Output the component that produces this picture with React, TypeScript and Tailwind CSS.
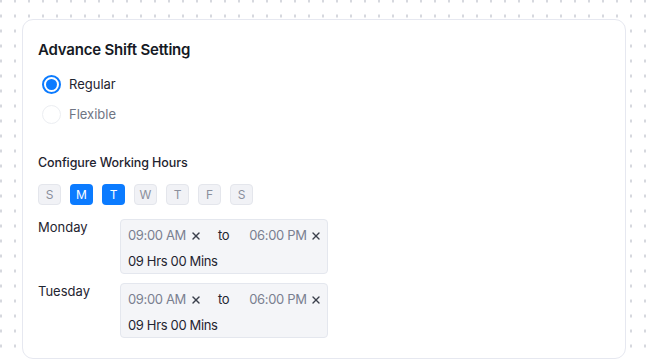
import { X } from 'lucide-react';

const days = [
  { d: 'S', on: false },
  { d: 'M', on: true },
  { d: 'T', on: true },
  { d: 'W', on: false },
  { d: 'T', on: false },
  { d: 'F', on: false },
  { d: 'S', on: false },
];

function TimeRow({ day }: { day: string }) {
  return (
    <div className="flex items-start">
      <div className="w-[82px] text-[13px] leading-[16px] text-[#1f2430]">{day}</div>
      <div className="w-[208px] h-[55px] rounded-[4px] border border-[#e4e7ee] bg-[#f4f5f8] pl-[7px] pt-[7px] whitespace-nowrap tracking-[-0.35px]">
        <div className="flex items-center h-[17px] text-[13px]">
          <span className="text-[#7a8090] shrink-0">09:00 AM</span>
          <X className="ml-[4px] w-[12px] h-[12px] text-[#3b404c] shrink-0" strokeWidth={2.8} />
          <span className="ml-[16px] text-[#1f2430] shrink-0">to</span>
          <span className="ml-[20px] text-[#7a8090] shrink-0">06:00 PM</span>
          <X className="ml-[3px] w-[12px] h-[12px] text-[#3b404c] shrink-0" strokeWidth={2.8} />
        </div>
        <div className="mt-[8px] text-[13px] text-[#1f2430]">09 Hrs 00 Mins</div>
      </div>
    </div>
  );
}

export default function App() {
  return (
    <div
      className="w-[647px] h-[359px] overflow-hidden bg-white bg-[radial-gradient(circle,#d6d8de_1.2px,transparent_1.4px)] bg-[size:14px_15px] bg-[position:-6px_-6.5px] pl-[22px] pt-[19px]"
      style={{ fontFamily: 'Inter, "Noto Sans", sans-serif' }}
    >
      <div className="w-[604px] h-[340px] rounded-[11px] border border-[#e6e8f0] bg-white px-[15px] pt-[20px]">
        <h1 className="text-[15px] font-semibold text-[#161a24] tracking-[-0.2px] leading-[20px]">Advance Shift Setting</h1>

        <div className="mt-[15px] flex flex-col gap-[10px]">
          <label className="flex items-center gap-[8px]">
            <span className="w-[19px] h-[19px] ml-[4px] rounded-full border-[2px] border-[#0b7bff] flex items-center justify-center">
              <span className="w-[11px] h-[11px] rounded-full bg-[#0b7bff]" />
            </span>
            <span className="text-[13px] text-[#1f2430]">Regular</span>
          </label>
          <label className="flex items-center gap-[8px]">
            <span className="w-[19px] h-[19px] ml-[4px] rounded-full border border-[#eceef2]" />
            <span className="text-[13px] text-[#6f7584]">Flexible</span>
          </label>
        </div>

        <h2 className="mt-[30px] text-[12.5px] font-medium text-[#1f2430] leading-[17px] tracking-[-0.1px]">Configure Working Hours</h2>

        <div className="mt-[13px] flex gap-[9px]">
          {days.map((x, i) => (
            <div
              key={i}
              className={
                x.on
                  ? 'w-[23px] h-[21px] rounded-[4px] bg-[#0b7bff] text-white text-[12px] flex items-center justify-center'
                  : 'w-[23px] h-[21px] rounded-[4px] bg-[#f1f2f6] border border-[#e4e6ec] text-[#8a8f9c] text-[12px] flex items-center justify-center'
              }
            >
              {x.d}
            </div>
          ))}
        </div>

        <div className="mt-[14px] flex flex-col gap-[9px]">
          <TimeRow day="Monday" />
          <TimeRow day="Tuesday" />
        </div>
      </div>
    </div>
  );
}
